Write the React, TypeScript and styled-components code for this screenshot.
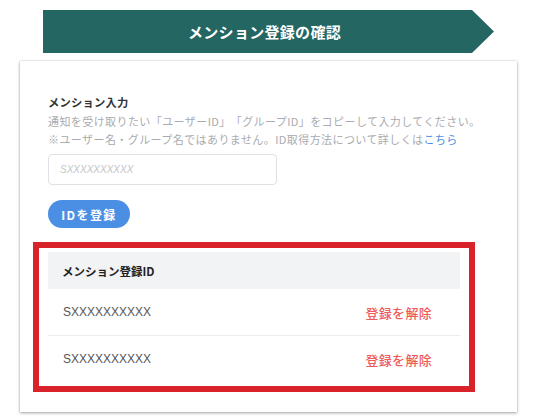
import React from "react";
import styled, { createGlobalStyle } from "styled-components";

const GlobalStyle = createGlobalStyle`
  html, body { margin: 0; padding: 0; background: #ffffff; }
  body {
    font-family: "Noto Sans CJK JP", "Noto Sans", "Liberation Sans", sans-serif;
    color: #333;
  }
  * { box-sizing: border-box; }
`;

const Page = styled.div`
  width: 535px;
  height: 418px;
  padding-top: 10px;
  overflow: hidden;
`;

const Banner = styled.div`
  margin-left: 43px;
  width: 451px;
  height: 43px;
  background: #246662;
  clip-path: polygon(0 0, calc(100% - 22px) 0, 100% 50%, calc(100% - 22px) 100%, 0 100%);
  display: flex;
  align-items: center;
  justify-content: center;
  padding-right: 8px;
  color: #ffffff;
  font-size: 15px;
  font-weight: 700;
  letter-spacing: 0.3px;
`;

const Card = styled.div`
  margin: 8px 0 0 20px;
  width: 497px;
  height: 351px;
  background: #fff;
  box-shadow: 0 1px 3px rgba(0, 0, 0, 0.35), 0 0 1px rgba(0, 0, 0, 0.2);
  padding: 32px 28px 19px 28px;
  display: flex;
  flex-direction: column;
`;

const Label = styled.div`
  font-size: 11.3px;
  line-height: 18px;
  font-weight: 700;
  color: #333;
  letter-spacing: 0.2px;
`;

const Desc = styled.p`
  margin: 1px 0 0;
  font-size: 11px;
  line-height: 18px;
  color: #a9abb0;
  letter-spacing: 0.42px;
  white-space: nowrap;
  text-spacing-trim: space-all;
`;

const Link = styled.a`
  color: #4a90e2;
  text-decoration: none;
`;

const Input = styled.input`
  margin-top: 6px;
  width: 229px;
  height: 31px;
  border: 1px solid #dfe1e6;
  border-radius: 4px;
  padding: 0 11px;
  font-family: "Liberation Sans", sans-serif;
  font-size: 10px;
  outline: none;
  &::placeholder {
    color: #c2c4c8;
    font-style: italic;
  }
`;

const Button = styled.button`
  margin-top: 15px;
  width: 82px;
  height: 28px;
  border: none;
  border-radius: 14px;
  background: #4a8fe4;
  color: #fff;
  font-family: "Noto Sans CJK JP", sans-serif;
  font-size: 12px;
  font-weight: 700;
  letter-spacing: 1.4px;
  padding: 0;
  display: flex;
  align-items: center;
  justify-content: center;
`;

const Highlight = styled.div`
  margin: 14px 0 0 -15px;
  width: 442px;
  border: 6px solid #d9232a;
  padding: 4px 9px 4px 9px;
`;

const Table = styled.div`
  display: flex;
  flex-direction: column;
`;

const HeaderRow = styled.div`
  height: 37px;
  background: #f2f3f5;
  display: flex;
  align-items: center;
  padding-left: 14px;
  font-size: 11.5px;
  font-weight: 700;
  color: #222;
`;

const Row = styled.div<{ $divider?: boolean }>`
  height: ${(p) => (p.$divider ? 47 : 46)}px;
  display: flex;
  align-items: center;
  justify-content: space-between;
  padding: 0 28px 0 15px;
  border-bottom: ${(p) => (p.$divider ? "1px solid #ececee" : "none")};
`;

const IdText = styled.span`
  font-family: "Liberation Sans", sans-serif;
  font-size: 12px;
  color: #555;
`;

const Unregister = styled.span`
  font-size: 13px;
  font-weight: 500;
  color: #ee5b5b;
  letter-spacing: 0.3px;
`;

const ids = ["SXXXXXXXXXX", "SXXXXXXXXXX"];

export default function App() {
  return (
    <Page>
      <GlobalStyle />
      <Banner>メンション登録の確認</Banner>
      <Card>
        <Label>メンション入力</Label>
        <Desc>
          通知を受け取りたい「ユーザーID」「グループID」をコピーして入力してください。
          <br />
          ※ユーザー名・グループ名ではありません。ID取得方法について詳しくは
          <Link href="#">こちら</Link>
        </Desc>
        <Input placeholder="SXXXXXXXXXX" />
        <Button>IDを登録</Button>
        <Highlight>
          <Table>
            <HeaderRow>メンション登録ID</HeaderRow>
            {ids.map((id, i) => (
              <Row key={i} $divider={i < ids.length - 1}>
                <IdText>{id}</IdText>
                <Unregister>登録を解除</Unregister>
              </Row>
            ))}
          </Table>
        </Highlight>
      </Card>
    </Page>
  );
}
